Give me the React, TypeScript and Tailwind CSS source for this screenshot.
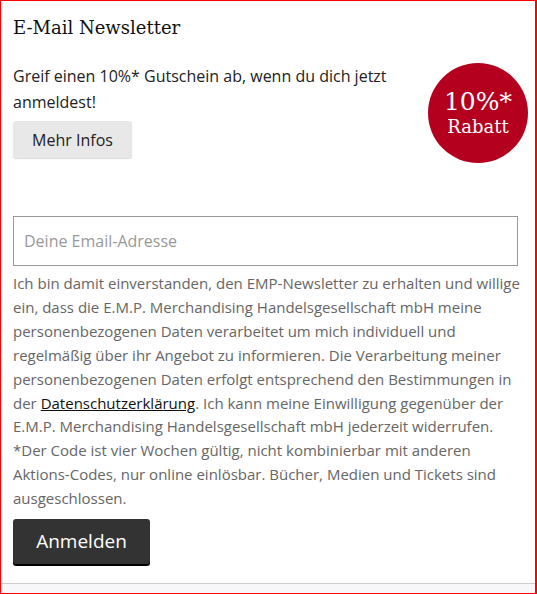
export default function App() {
  return (
    <div className="w-[537px] h-[594px] border-t border-l border-b border-r-2 border-[#ff0000] bg-white flex flex-col overflow-hidden" style={{ fontFamily: '"Open Sans", sans-serif' }}>
      <div className="flex-1 flex flex-col px-3">
        <h2 className="mt-[15px] text-[18px] leading-[24px] text-[#111]" style={{ fontFamily: '"DejaVu Serif", serif' }}>
          E-Mail Newsletter
        </h2>
        <div className="flex mt-[23px]">
          <div className="flex-1 flex flex-col items-start">
            <p className="text-[16px] leading-[26px] text-[#222]">
              Greif einen 10%* Gutschein ab, wenn du dich jetzt anmeldest!
            </p>
            <button className="mt-[6px] bg-[#e8e8e8] rounded-[3px] h-[37px] w-[119px] text-[16px] text-[#222] shadow-[0_1px_1px_rgba(0,0,0,0.15)]">
              Mehr Infos
            </button>
          </div>
          <div className="w-[100px] h-[100px] mt-0 mr-[-5px] ml-[30px] shrink-0 rounded-full bg-[#b4001e] flex flex-col items-center justify-center text-white" style={{ fontFamily: '"DejaVu Serif", serif' }}>
            <span className="text-[25px] leading-[28px]">10%*</span>
            <span className="text-[18px] leading-[22px]">Rabatt</span>
          </div>
        </div>
        <input
          className="mt-[53px] h-[50px] w-[505px] border border-[#999] px-[10px] text-[16px] text-[#333] placeholder:text-[#999] outline-none"
          placeholder="Deine Email-Adresse"
        />
        <p className="mt-[6px] text-[15px] leading-[23.9px] text-[#666]">
          Ich bin damit einverstanden, den EMP-Newsletter zu erhalten und willige ein, dass die E.M.P. Merchandising Handelsgesellschaft mbH meine personenbezogenen Daten verarbeitet um mich individuell und regelmäßig über ihr Angebot zu informieren. Die Verarbeitung meiner personenbezogenen Daten erfolgt entsprechend den Bestimmungen in der{" "}
          <a className="text-[#111] underline" href="#">Datenschutzerklärung</a>. Ich kann meine Einwilligung gegenüber der E.M.P. Merchandising Handelsgesellschaft mbH jederzeit widerrufen. *Der Code ist vier Wochen gültig, nicht kombinierbar mit anderen Aktions-Codes, nur online einlösbar. Bücher, Medien und Tickets sind ausgeschlossen.
        </p>
        <button className="mt-[8px] w-[137px] h-[45px] bg-[#333] rounded-[3px] text-white text-[19px] shadow-[0_2px_0_#000] self-start">
          Anmelden
        </button>
      </div>
      <div className="h-[10px] border-t border-[#ccc] bg-[#f7f7f9]" />
    </div>
  );
}
